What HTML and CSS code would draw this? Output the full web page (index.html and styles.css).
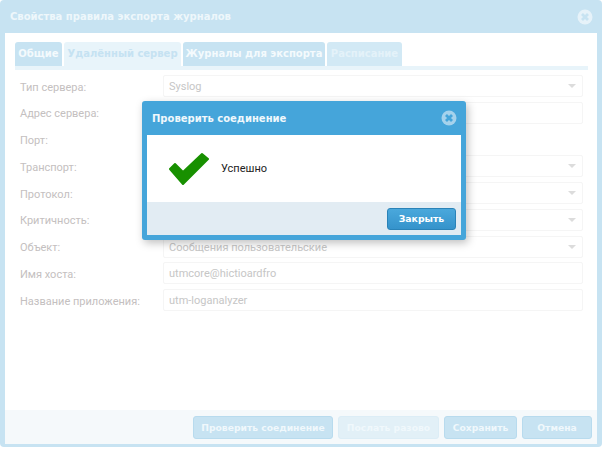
FILE: index.html
```html
<!DOCTYPE html>
<html lang="ru">

<head>
    <meta charset="UTF-8">
    <title>Свойства правила экспорта журналов</title>
    <link rel="stylesheet" href="styles.css">
</head>

<body>
    <div class="window">
        <div class="title-bar">
            <span class="title">Свойства правила экспорта журналов</span>
            <svg class="close-icon" width="16" height="16" viewBox="0 0 16 16">
                <circle cx="8" cy="8" r="7.5" fill="#e6f2f9" />
                <path d="M5 5l6 6M11 5l-6 6" stroke="#c7e3f2" stroke-width="2.8" />
            </svg>
        </div>

        <div class="content">
            <div class="tabs">
                <div class="tab tab-first">Общие</div>
                <div class="tab tab-active">Удалённый сервер</div>
                <div class="tab tab-logs">Журналы для экспорта</div>
                <div class="tab tab-disabled">Расписание</div>
            </div>

            <div class="form">
                <label>Тип сервера:</label>
                <div class="field select">Syslog</div>
                <label>Адрес сервера:</label>
                <div class="field"></div>
                <label>Порт:</label>
                <div class="field short"></div>
                <label>Транспорт:</label>
                <div class="field select"></div>
                <label>Протокол:</label>
                <div class="field select"></div>
                <label>Критичность:</label>
                <div class="field select"></div>
                <label>Объект:</label>
                <div class="field select">Сообщения пользовательские</div>
                <label>Имя хоста:</label>
                <div class="field">utmcore@hictioardfro</div>
                <label>Название приложения:</label>
                <div class="field">utm-loganalyzer</div>
            </div>
        </div>

        <div class="footer">
            <button class="btn btn-check">Проверить соединение</button>
            <button class="btn btn-disabled">Послать разово</button>
            <button class="btn btn-save">Сохранить</button>
            <button class="btn btn-cancel">Отмена</button>
        </div>
    </div>

    <div class="modal">
        <div class="modal-title">
            <span>Проверить соединение</span>
            <svg class="close-icon" width="16" height="16" viewBox="0 0 16 16">
                <circle cx="8" cy="8" r="7.5" fill="#a5d2ec" />
                <path d="M5 5l6 6M11 5l-6 6" stroke="#45a5da" stroke-width="2.8" />
            </svg>
        </div>
        <div class="modal-body">
            <svg class="check" width="42" height="33" viewBox="0 0 42 33">
                <path d="M2 17l5-5 8 8L34 2l6 5-25 25z" fill="#189000" stroke="#189000" stroke-width="2" stroke-linejoin="round" />
            </svg>
            <span>Успешно</span>
        </div>
        <div class="modal-footer">
            <button class="modal-btn">Закрыть</button>
        </div>
    </div>
</body>

</html>
```

FILE: styles.css
```css
html, body {
    height: 100%;
}

body {
    margin: 0;
    background: #fff;
    font-family: Roboto, sans-serif;
    overflow: hidden;
}

.window {
    box-sizing: border-box;
    width: 602px;
    height: 447px;
    background: #c7e3f2;
    border-radius: 4px;
    padding: 0 5px 3px;
    display: flex;
    flex-direction: column;
}

.title-bar {
    height: 33px;
    display: flex;
    align-items: center;
    justify-content: space-between;
    padding: 0 4px 0 5px;
    flex-shrink: 0;
}

.title {
    font: bold 10px "DejaVu Sans", sans-serif;
    color: #eef7fb;
}

.content {
    flex: 1;
    background: #fff;
    padding: 9px 9px 0 10px;
}

.tabs {
    display: flex;
    gap: 2px;
    height: 24px;
    border-bottom: 4px solid #e8f4fa;
}

.tab {
    box-sizing: border-box;
    height: 24px;
    border-radius: 3px 3px 0 0;
    background: #c7e3f2;
    color: #f4fafd;
    font: bold 10px/24px "DejaVu Sans", sans-serif;
    text-align: center;
    white-space: nowrap;
}

.tab-first {
    width: 47px;
}

.tab-active {
    width: 117px;
    background: #e8f4fa;
    color: #c5e2f2;
}

.tab-logs {
    width: 142px;
}

.tab-disabled {
    width: 75px;
    background: #d2e9f5;
    color: #e4f2f9;
}

.form {
    display: grid;
    grid-template-columns: 143px 420px;
    grid-auto-rows: 22px;
    row-gap: 4.75px;
    align-items: center;
    padding: 5px 0 0 5px;
}

.form label {
    font-size: 11px;
    color: #c4c0c0;
    padding-top: 2px;
}

.field {
    box-sizing: border-box;
    height: 22px;
    border: 1px solid #f5f5f5;
    border-radius: 2px;
    padding: 0 5px;
    font-size: 11px;
    line-height: 22px;
    color: #c6c6c6;
}

.short {
    width: 200px;
}

.select {
    position: relative;
}

.select::after {
    content: "";
    position: absolute;
    right: 6px;
    top: 8px;
    border-left: 4px solid transparent;
    border-right: 4px solid transparent;
    border-top: 4px solid #dcdcdc;
}

.footer {
    height: 34px;
    background: #f5f9fb;
    display: flex;
    justify-content: flex-end;
    align-items: center;
    gap: 5px;
    padding-right: 5px;
    flex-shrink: 0;
}

.btn {
    height: 23px;
    padding: 0;
    border: 1px solid #b8dbee;
    border-radius: 3px;
    background: #c7e3f2;
    color: #f0f8fc;
    font: bold 9.2px "DejaVu Sans", sans-serif;
}

.btn-check {
    width: 140px;
}

.btn-disabled {
    width: 101px;
    background: #e2f0f7;
    border-color: #dcedf6;
}

.btn-save {
    width: 73px;
}

.btn-cancel {
    width: 70px;
}

.close-icon {
    display: block;
}

/* dialog on top of the window */
.modal {
    position: absolute;
    left: 142px;
    top: 101px;
    box-sizing: border-box;
    width: 324px;
    height: 139px;
    background: #45a5da;
    border-radius: 3px;
    padding: 0 5px 5px;
    display: flex;
    flex-direction: column;
    box-shadow: 2px 3px 8px rgba(0, 0, 0, 0.25);
}

.modal-title {
    height: 34px;
    display: flex;
    align-items: center;
    justify-content: space-between;
    padding: 0 4px 0 5px;
    font: bold 10px "DejaVu Sans", sans-serif;
    color: #f0f8fc;
    flex-shrink: 0;
}

.modal-body {
    flex: 1;
    background: #fff;
    display: flex;
    align-items: center;
    font-size: 11px;
    color: #222;
    padding-left: 21px;
    gap: 11px;
}

.modal-footer {
    height: 33px;
    background: #e2ecf3;
    display: flex;
    justify-content: flex-end;
    align-items: center;
    padding-right: 5px;
    flex-shrink: 0;
}

.modal-btn {
    width: 69px;
    height: 22px;
    padding: 0;
    border: 1px solid #2a83b8;
    border-radius: 3px;
    background: linear-gradient(#4aa8dc, #3593cb);
    color: #fff;
    font: bold 9.3px "DejaVu Sans", sans-serif;
}
```
